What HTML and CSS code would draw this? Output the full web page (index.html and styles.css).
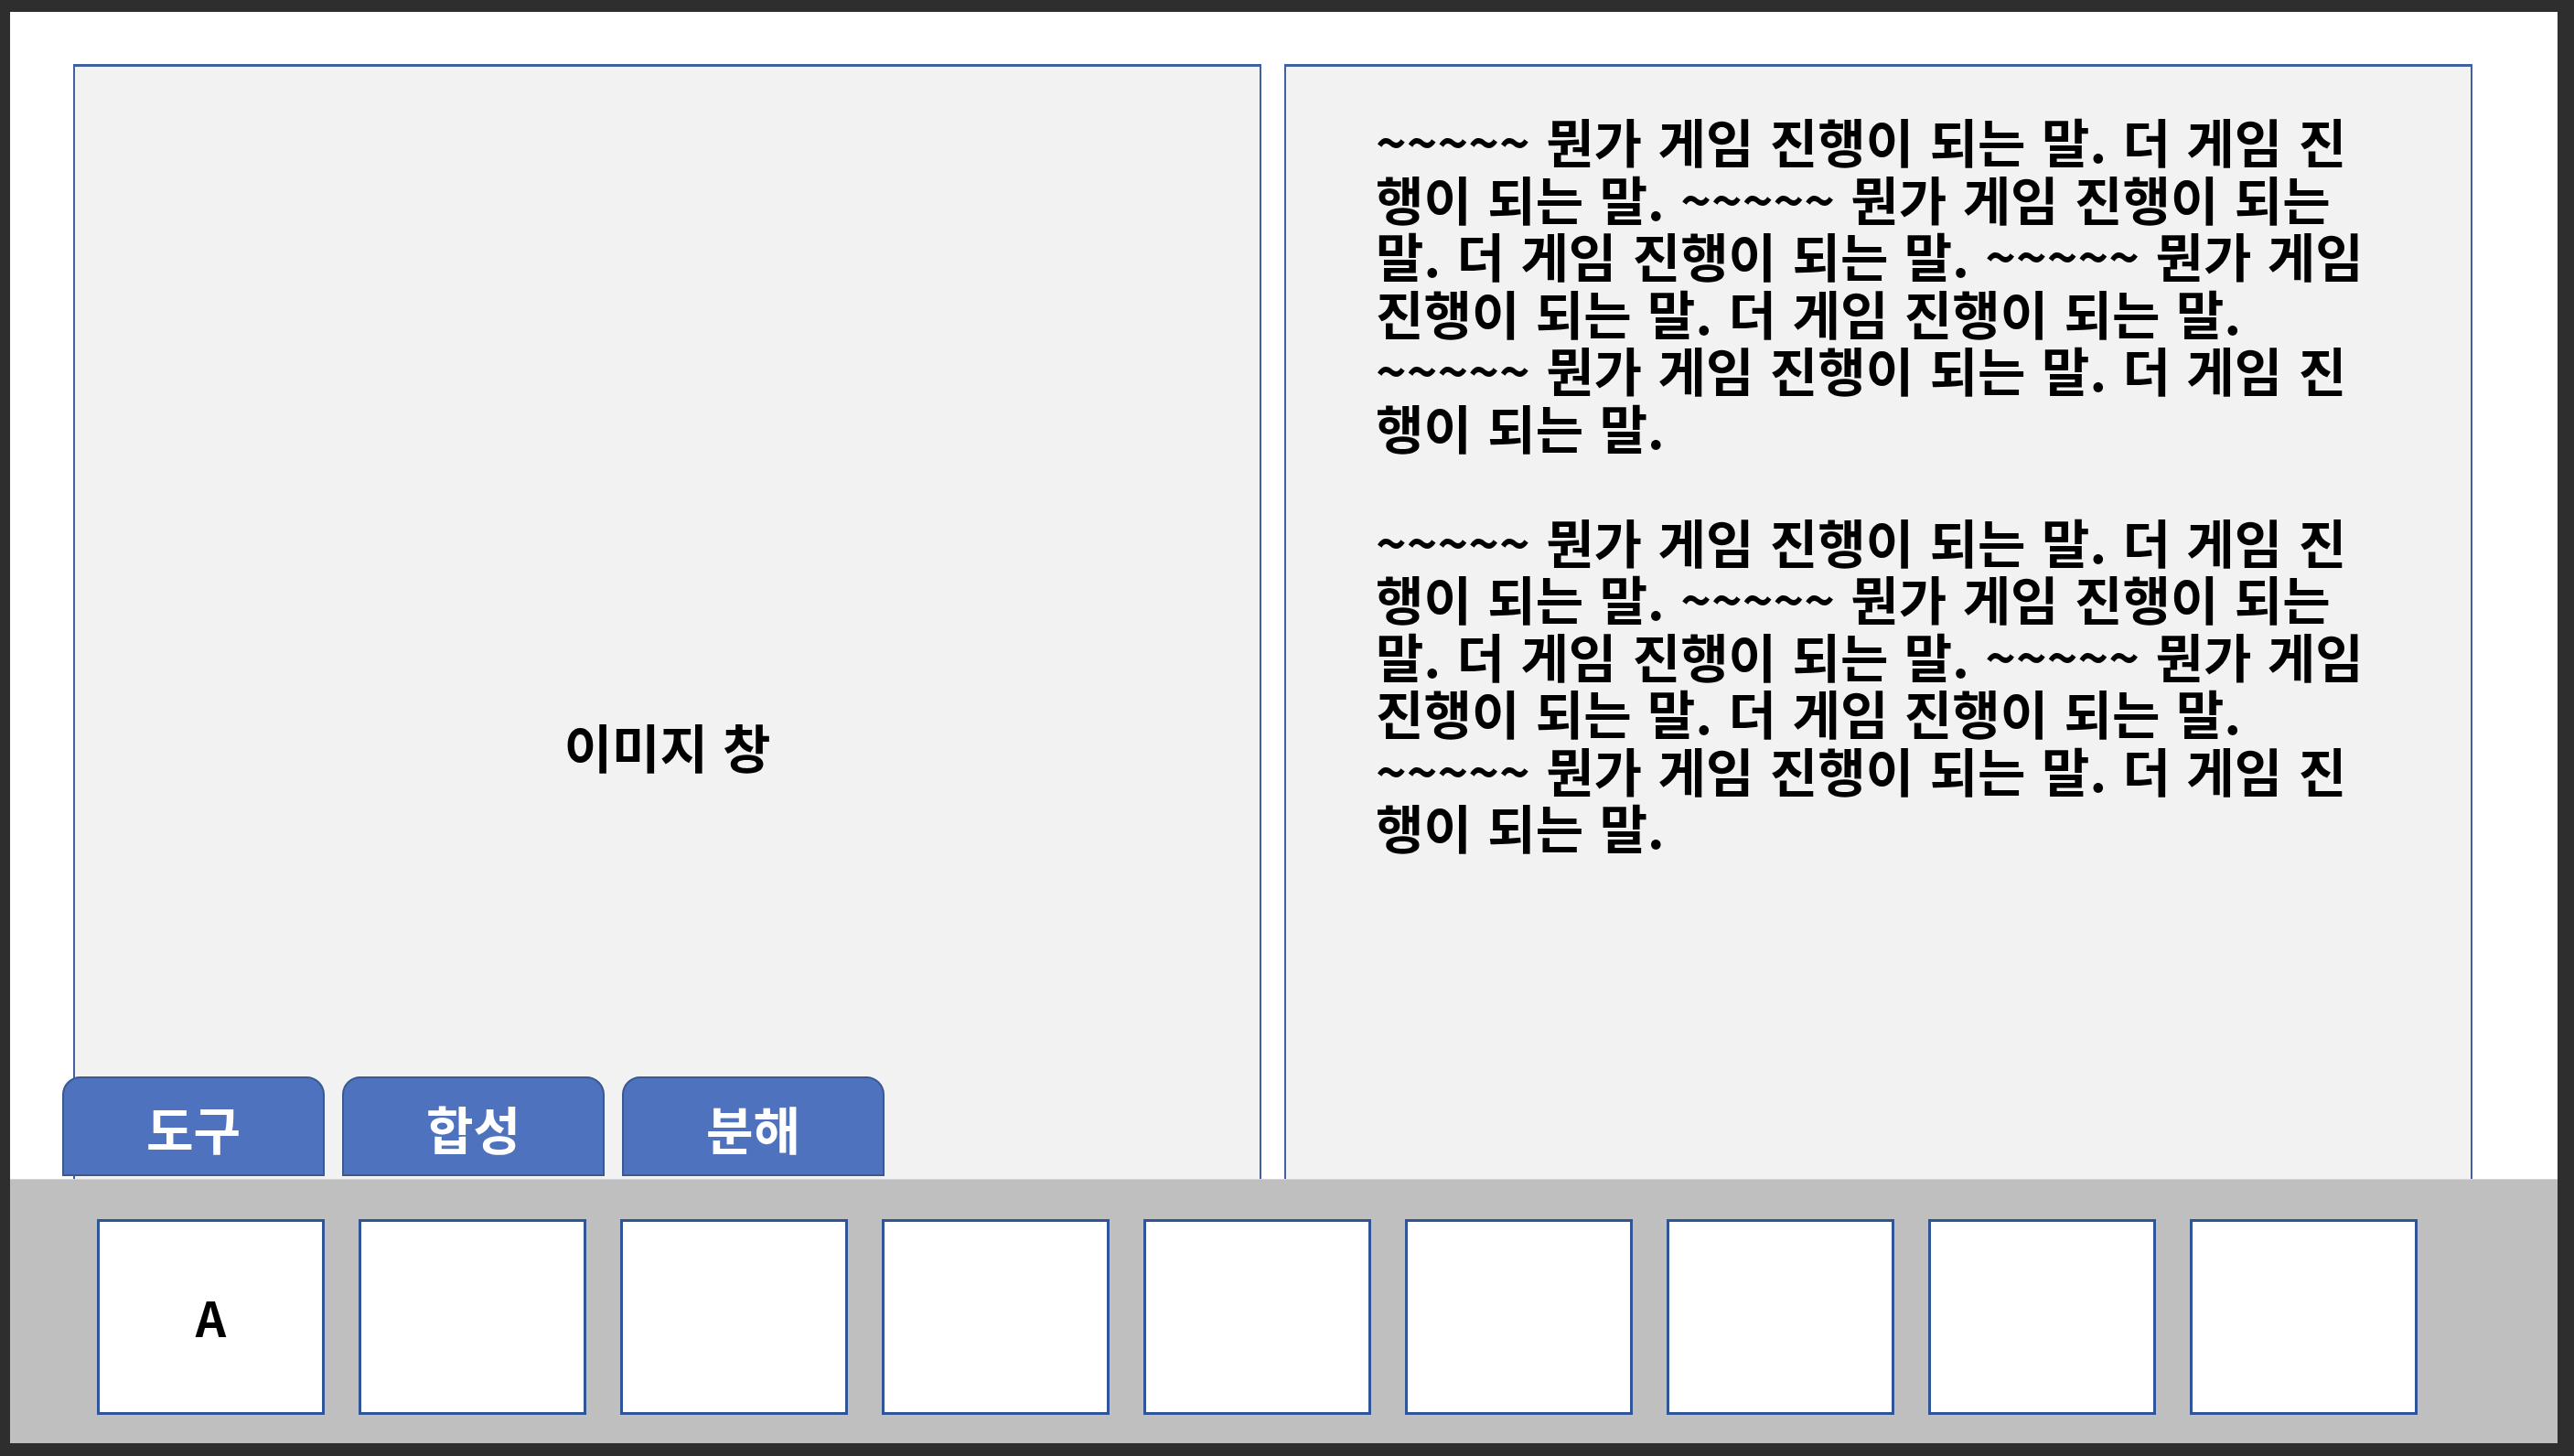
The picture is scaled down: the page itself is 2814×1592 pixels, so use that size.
FILE: index.html
```html
<!DOCTYPE html>
<html lang="ko">
<head>
<meta charset="utf-8">
<title>게임 화면</title>
<link rel="stylesheet" href="styles.css">
</head>
<body>
<div class="frame">
  <div class="panels">
    <section class="panel image-panel">
      <div class="image-label">이미지 창</div>
    </section>
    <section class="panel text-panel">
      <p class="story">~~~~~ 뭔가 게임 진행이 되는 말. 더 게임 진행이 되는 말. ~~~~~ 뭔가 게임 진행이 되는 말. 더 게임 진행이 되는 말. ~~~~~ 뭔가 게임 진행이 되는 말. 더 게임 진행이 되는 말. ~~~~~ 뭔가 게임 진행이 되는 말. 더 게임 진행이 되는 말.</p>
      <p class="story gap">~~~~~ 뭔가 게임 진행이 되는 말. 더 게임 진행이 되는 말. ~~~~~ 뭔가 게임 진행이 되는 말. 더 게임 진행이 되는 말. ~~~~~ 뭔가 게임 진행이 되는 말. 더 게임 진행이 되는 말. ~~~~~ 뭔가 게임 진행이 되는 말. 더 게임 진행이 되는 말.</p>
    </section>
  </div>
  <div class="tabs">
    <div class="tab">도구</div>
    <div class="tab">합성</div>
    <div class="tab">분해</div>
  </div>
  <div class="inventory">
    <div class="slot">A</div>
    <div class="slot"></div>
    <div class="slot"></div>
    <div class="slot"></div>
    <div class="slot"></div>
    <div class="slot"></div>
    <div class="slot"></div>
    <div class="slot"></div>
    <div class="slot"></div>
  </div>
</div>
</body>
</html>
```
FILE: styles.css
```css
html, body {
  margin: 0;
  padding: 0;
}
body {
  background: #2e2e2e;
  width: 2814px;
  height: 1592px;
  overflow: hidden;
  font-family: "Noto Sans CJK KR", "Noto Sans", sans-serif;
  font-weight: 700;
  color: #000;
}
.frame {
  position: relative;
  margin: 13px 18px 0 11px;
  width: 2785px;
  height: 1565px;
  background: #ffffff;
  overflow: hidden;
}
.panels {
  display: flex;
  gap: 25px;
  padding: 57px 0 0 69px;
}
.panel {
  box-sizing: border-box;
  width: 1299px;
  height: 1494px;
  background: #f2f2f2;
  border: 2px solid #41609f;
  border-top-width: 3px;
}
.image-panel {
  display: flex;
  align-items: center;
  justify-content: center;
}
.image-label {
  font-size: 57px;
  line-height: 1;
  padding-bottom: 4px;
}
.text-panel {
  padding: 49px 101px 0 98px;
}
.story {
  margin: 0;
  font-size: 57px;
  line-height: 62.5px;
  word-spacing: 1.5px;
}
.story.gap {
  margin-top: 62.5px;
}
.tabs {
  position: absolute;
  left: 57px;
  bottom: 292px;
  display: flex;
  gap: 19px;
}
.tab {
  box-sizing: border-box;
  width: 287px;
  height: 109px;
  background: #4e72be;
  border: 2px solid #3a5993;
  border-radius: 20px 20px 0 0;
  color: #ffffff;
  font-size: 56px;
  display: flex;
  align-items: center;
  justify-content: center;
  padding-top: 1px;
}
.inventory {
  position: absolute;
  left: 0;
  right: 0;
  bottom: 0;
  height: 289px;
  box-sizing: border-box;
  background: #bfbfbf;
  border-top: 1px solid #d4d4d4;
  display: grid;
  grid-template-columns: repeat(9, 249px);
  column-gap: 37px;
  padding: 43px 0 0 95px;
  align-content: start;
}
.slot {
  box-sizing: border-box;
  height: 214px;
  background: #ffffff;
  border: 3px solid #2f5597;
  display: flex;
  align-items: center;
  justify-content: center;
  font-size: 52px;
  padding-bottom: 2px;
}
```
